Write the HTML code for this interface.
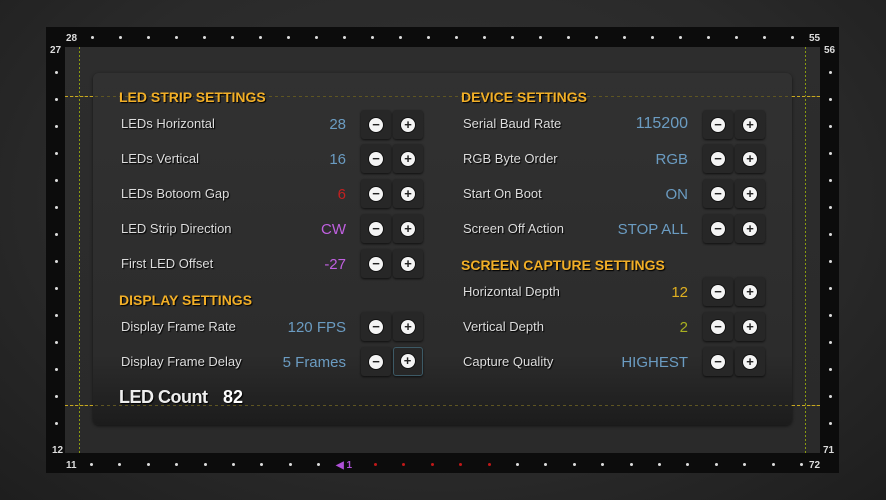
<!DOCTYPE html>
<html><head><meta charset="utf-8"><style>
*{margin:0;padding:0;box-sizing:border-box}
body{width:886px;height:500px;overflow:hidden;background:radial-gradient(ellipse at 50% 40%,#333 0%,#2a2a2a 60%,#1e1e1e 100%);font-family:"Liberation Sans",sans-serif;position:relative}
#frame{position:absolute;left:46px;top:27px;width:793px;height:446px;background:#0c0c0c}
#inner{position:absolute;left:65px;top:47px;width:755px;height:406px;background:linear-gradient(#2d2d2d,#2a2a2a)}
.vg{position:absolute;top:47px;height:406px;width:1px;background:repeating-linear-gradient(180deg,#8a9a10 0 2px,transparent 2px 4px)}
.hg{position:absolute;left:65px;width:755px;height:1px;background:repeating-linear-gradient(90deg,#5e5522 0 3px,transparent 3px 6px)}
.hgo{position:absolute;width:28px;height:1px;background:repeating-linear-gradient(90deg,#c8a820 0 3px,transparent 3px 5px)}
#panel{position:absolute;left:93px;top:73px;width:699px;height:352px;border-radius:6px;background:linear-gradient(#313131 0%,#2c2c2c 80%,#1c1c1c 100%);box-shadow:0 1px 3px rgba(0,0,0,.6)}
.d{position:absolute;width:3px;height:3px;border-radius:50%;background:#ddd}
.n{position:absolute;font-size:10px;font-weight:bold;color:#ddd}
.h{position:absolute;font-size:14px;font-weight:bold;color:#f2af27;text-shadow:1px 1px 1px #000}
.l{position:absolute;font-size:13px;color:#ddd;text-shadow:1px 1px 1px #000}
.v{position:absolute;font-size:15px;text-align:right;width:150px}
.b{position:absolute;width:30px;height:29px;background:#272727;border-radius:3px;box-shadow:0 1px 2px rgba(0,0,0,.7)}
.b i{position:absolute;left:8px;top:7.5px;width:14px;height:14px;border-radius:50%;background:#f4f4f4;color:#222;font-style:normal;font-weight:bold;font-size:13px;line-height:14px;text-align:center;box-shadow:0 0 0 1px #111}
.bl{color:#6b9cc2}
</style></head><body>
<div id="frame"></div><div id="inner"></div>
<div id="panel"></div>
<div class="vg" style="left:79px"></div><div class="vg" style="left:805px"></div>
<div class="hg" style="top:96px"></div><div class="hg" style="top:405px"></div>
<div class="hgo" style="left:65px;top:96px"></div><div class="hgo" style="left:792px;top:96px"></div>
<div class="hgo" style="left:65px;top:405px"></div><div class="hgo" style="left:792px;top:405px"></div>
<div id="dots"></div>
<div class="n" style="left:66px;top:33px">28</div>
<div class="n" style="left:50px;top:45px">27</div>
<div class="n" style="left:809px;top:33px">55</div>
<div class="n" style="left:824px;top:45px">56</div>
<div class="n" style="left:52px;top:445px">12</div>
<div class="n" style="left:66px;top:460px">11</div>
<div class="n" style="left:823px;top:445px">71</div>
<div class="n" style="left:809px;top:460px">72</div>
<div class="n" style="left:336px;top:460px;color:#b050d8">◀ 1</div>

<div class="h" style="left:119px;top:89px">LED STRIP SETTINGS</div>
<div class="h" style="left:119px;top:292px">DISPLAY SETTINGS</div>
<div class="h" style="left:461px;top:89px">DEVICE SETTINGS</div>
<div class="h" style="left:461px;top:257px">SCREEN CAPTURE SETTINGS</div>

<div class="l" style="left:121px;top:116px">LEDs Horizontal</div>
<div class="l" style="left:121px;top:151px">LEDs Vertical</div>
<div class="l" style="left:121px;top:186px">LEDs Botoom Gap</div>
<div class="l" style="left:121px;top:221px">LED Strip Direction</div>
<div class="l" style="left:121px;top:256px">First LED Offset</div>
<div class="l" style="left:121px;top:319px">Display Frame Rate</div>
<div class="l" style="left:121px;top:354px">Display Frame Delay</div>
<div class="l" style="left:463px;top:116px">Serial Baud Rate</div>
<div class="l" style="left:463px;top:151px">RGB Byte Order</div>
<div class="l" style="left:463px;top:186px">Start On Boot</div>
<div class="l" style="left:463px;top:221px">Screen Off Action</div>
<div class="l" style="left:463px;top:284px">Horizontal Depth</div>
<div class="l" style="left:463px;top:319px">Vertical Depth</div>
<div class="l" style="left:463px;top:354px">Capture Quality</div>

<div class="v bl" style="left:196px;top:116px">28</div>
<div class="v bl" style="left:196px;top:151px">16</div>
<div class="v" style="left:196px;top:186px;color:#c42020">6</div>
<div class="v" style="left:196px;top:221px;color:#c060e0">CW</div>
<div class="v" style="left:196px;top:256px;color:#c060e0">-27</div>
<div class="v bl" style="left:196px;top:319px">120 FPS</div>
<div class="v bl" style="left:196px;top:354px">5 Frames</div>
<div class="v bl" style="left:538px;top:115px;font-size:16px">115200</div>
<div class="v bl" style="left:538px;top:151px">RGB</div>
<div class="v bl" style="left:538px;top:186px">ON</div>
<div class="v bl" style="left:538px;top:221px">STOP ALL</div>
<div class="v" style="left:538px;top:284px;color:#e0b020">12</div>
<div class="v" style="left:538px;top:319px;color:#a8b020">2</div>
<div class="v bl" style="left:538px;top:354px">HIGHEST</div>

<div style="position:absolute;left:119px;top:387px;font-size:18px;font-weight:bold;color:#eee;text-shadow:1px 1px 1px #000;letter-spacing:-0.5px">LED Count</div>
<div style="position:absolute;left:223px;top:387px;font-size:18px;font-weight:bold;color:#fff;text-shadow:1px 1px 1px #000">82</div>
<div id="btns"></div>
<script>
var h='';
function dot(x,y,c){h+='<div class="d" style="left:'+(x-1)+'px;top:'+(y-1)+'px'+(c?';background:'+c:'')+'"></div>';}
for(var x=92;x<800;x+=28)dot(x,37);
for(var y=72;y<440;y+=27)dot(56,y),dot(830,y);
for(var i=0;i<26;i++){var x=91+i*28.4;if(x>325&&x<355)continue;dot(x,464,(x>355&&x<500)?'#c01818':null);}
document.getElementById('dots').innerHTML=h;
var b='';
function pair(x,y,hl){b+='<div class="b" style="left:'+x+'px;top:'+(y-14)+'px"><i>−</i></div><div class="b" style="left:'+(x+32)+'px;top:'+(y-14)+'px'+(hl?';border:1.5px solid #3d5a66':'')+'"><i'+(hl?' style="left:6.5px;top:6px"':'')+'>+</i></div>';}
[124,158,193,228,263,326].forEach(function(y){pair(361,y)});pair(361,361,1);
[124,158,193,228,291,326,361].forEach(function(y){pair(703,y)});
document.getElementById('btns').innerHTML=b;
</script>
</body></html>
